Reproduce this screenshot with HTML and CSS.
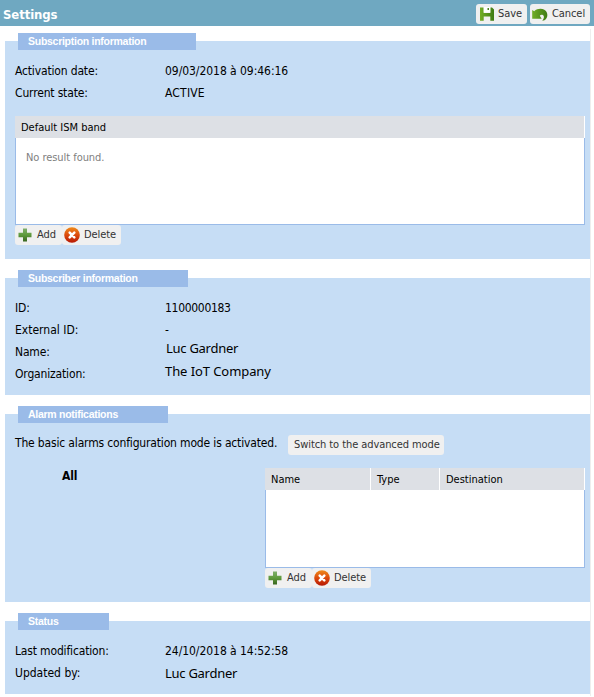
FILE: index.html
```html
<!DOCTYPE html>
<html lang="en">
<head>
<meta charset="utf-8">
<title>Settings</title>
<link rel="stylesheet" href="styles.css">
</head>
<body>
<svg class="defs" width="0" height="0" aria-hidden="true">
  <defs>
    <linearGradient id="green" x1="0" y1="0" x2="0" y2="1"><stop offset="0" stop-color="#7fae6b"/><stop offset=".5" stop-color="#5e9a3c"/><stop offset="1" stop-color="#37651f"/></linearGradient>
    <linearGradient id="leaf" x1="0" y1="0" x2="1" y2="0"><stop offset="0" stop-color="#72ad25"/><stop offset="1" stop-color="#3e7b13"/></linearGradient>
    <linearGradient id="red" x1="0" y1="0" x2="0" y2="1"><stop offset="0" stop-color="#ef8b1b"/><stop offset=".5" stop-color="#dc4a0c"/><stop offset="1" stop-color="#b51705"/></linearGradient>
    <symbol id="plus" viewBox="0 0 16 16"><path fill="url(#green)" d="M6 1.500h4v4.300h4.500v4.400H10v4.300H6v-4.300H1.500V5.800H6z"/></symbol>
    <symbol id="cross" viewBox="0 0 16 16"><circle cx="8" cy="8" r="7.800" fill="url(#red)"/><path d="M5.700 5.700l4.600 4.600M10.300 5.700l-4.600 4.600" stroke="#fff" stroke-width="2.600" stroke-linecap="round"/></symbol>
    <symbol id="disk" viewBox="0 0 16 16"><path fill="url(#leaf)" d="M1 1.500h3.700v5.500h6.600V1.500h1.700l2 2v11.300h-3.700v-4.300H4.700v4.300H1z"/><path fill="#fff" d="M4.700 1h6.600v5.500H4.700z"/><path fill="#477f1c" d="M8.500 2H10v2H8.500z"/></symbol>
    <symbol id="undo" viewBox="0 0 16 16"><path fill="url(#leaf)" d="M.200 4l2 1.300C5 2.600 9.300 2.200 12.300 3.800c3.800 2.200 4.100 7.500.600 10.300-.5.400-1.500.600-2.700.600 2-2 2.300-4.700.6-5.600-1.200-.6-2.300-.1-3 .7l1.900 3H.200z"/></symbol>
  </defs>
</svg>
<header class="bar">
  <h1>Settings</h1>
  <div class="actions">
    <button class="btn save"><svg><use href="#disk"/></svg><span>Save</span></button>
    <button class="btn cancel"><svg><use href="#undo"/></svg><span>Cancel</span></button>
  </div>
</header>
<main>
  <section class="panel subscription">
    <h2>Subscription information</h2>
    <dl>
      <dt>Activation date:</dt><dd class="date">09/03/2018 à 09:46:16</dd>
      <dt>Current state:</dt><dd class="state">ACTIVE</dd>
    </dl>
    <div class="grid">
      <div class="head"><span>Default ISM band</span></div>
      <div class="body">No result found.</div>
    </div>
    <div class="tools">
      <button class="btn add"><svg><use href="#plus"/></svg><span>Add</span></button><button class="btn del"><svg><use href="#cross"/></svg><span>Delete</span></button>
    </div>
  </section>
  <section class="panel subscriber">
    <h2>Subscriber information</h2>
    <dl>
      <dt>ID:</dt><dd class="number">1100000183</dd>
      <dt class="loose">External ID:</dt><dd>-</dd>
      <dt>Name:</dt><dd class="alt name">Luc Gardner</dd>
      <dt>Organization:</dt><dd class="alt company">The IoT Company</dd>
    </dl>
  </section>
  <section class="panel alarms">
    <h2>Alarm notifications</h2>
    <div class="mode"><span>The basic alarms configuration mode is activated.</span><button class="btn switch"><span>Switch to the advanced mode</span></button></div>
    <div class="split">
      <strong>All</strong>
      <div class="list">
        <div class="grid">
          <div class="head"><span>Name</span><span>Type</span><span>Destination</span></div>
          <div class="body"></div>
        </div>
        <div class="tools">
          <button class="btn add"><svg><use href="#plus"/></svg><span>Add</span></button><button class="btn del"><svg><use href="#cross"/></svg><span>Delete</span></button>
        </div>
      </div>
    </div>
  </section>
  <section class="panel status">
    <h2>Status</h2>
    <dl>
      <dt>Last modification:</dt><dd class="date">24/10/2018 à 14:52:58</dd>
      <dt class="loose">Updated by:</dt><dd class="alt updater">Luc Gardner</dd>
    </dl>
  </section>
</main>
</body>
</html>
```
FILE: styles.css
```css
* { box-sizing: border-box; }
body { margin: 0; background: #fff; color: #000; font: 12px/22px "DejaVu Sans Condensed", "DejaVu Sans", sans-serif; font-stretch: condensed; letter-spacing: -.16px; white-space: nowrap; }
.defs { display: block; height: 0; }
h1, h2, dl, dd { margin: 0; }
.bar { display: flex; justify-content: space-between; height: 26px; padding: 4px 4px 0 3px; background: #6fa8c1; }
h1 { color: #fff; font-size: 13px; line-height: 21px; letter-spacing: -.1px; }
.actions { display: flex; gap: 3px; }
.btn { display: flex; align-items: center; height: 20px; margin: 0; padding: 0 0 0 3px; border: 0; border-radius: 3px; background: #f0f0f0; color: #333; font: inherit; font-size: 11px; line-height: 20px; letter-spacing: -.08px; }
.btn svg { width: 16px; height: 16px; flex: none; margin-right: 3px; }
.save { width: 51px; }
.cancel { width: 60px; padding-left: 2px; }
.cancel svg { margin-right: 4px; }
main { width: 591px; height: 667px; margin-top: 3px; padding: 12px 0 0 5px; border-right: 1px solid #eee; }
.panel { width: 585px; margin-bottom: 19px; padding: 0 5px 0 10px; background: #c6ddf5; display: flow-root; }
.subscription { height: 218px; }
.subscriber { height: 117px; }
.alarms { height: 188px; }
.status { height: 73px; }
h2 { height: 17px; margin: -8px 0 10px 3px; padding-left: 10px; background: #9abbe8; color: #fff; font: bold 10.500px/17px "Liberation Sans", Arial, sans-serif; letter-spacing: -.27px; }
.subscription h2 { width: 178px; }
.subscriber h2 { width: 170px; }
.alarms h2 { width: 150px; }
.status h2 { width: 91px; }
dl { display: grid; grid-template-columns: 150px 1fr; grid-auto-rows: 22px; }
.date { letter-spacing: -.05px; }
.state { letter-spacing: .2px; }
.number { letter-spacing: -.3px; }
.loose { letter-spacing: 0; }
.alt { font: 13px/22px "Noto Sans", sans-serif; letter-spacing: -.27px; }
.name { margin-top: -4px; padding-left: 1px; }
.company { margin-top: -3px; letter-spacing: -.08px; }
.grid { width: 570px; }
.subscription .grid { margin-top: 12px; }
.head { display: flex; height: 22px; background: #dde0e5; border-right: 1px solid #fff; font-size: 11px; line-height: 23px; letter-spacing: 0; }
.head span { padding-left: 6px; }
.body { height: 87px; padding: 9px 10px; border: 1px solid #9abbe8; border-top: 0; background: #fff; color: #808080; font-size: 11px; letter-spacing: -.05px; }
.tools { display: flex; height: 20px; }
.add { width: 47px; padding-left: 2px; }
.del { width: 59px; padding-left: 2px; }
.add svg, .del svg { margin-right: 4px; }
.mode { display: flex; align-items: center; justify-content: space-between; width: 429px; height: 22px; margin-top: 11px; }
.mode > span { margin-top: -4px; }
.switch { width: 156px; padding-left: 6px; }
.split { display: flex; margin-top: 12px; }
.split strong { width: 250px; padding: 0 0 0 47px; line-height: 16px; }
.list .grid { width: 320px; }
.list .head span + span { border-left: 1px solid #fff; }
.list .head span:nth-child(1) { width: 105px; }
.list .head span:nth-child(2) { width: 69px; }
.list .body { height: 78px; }
```
